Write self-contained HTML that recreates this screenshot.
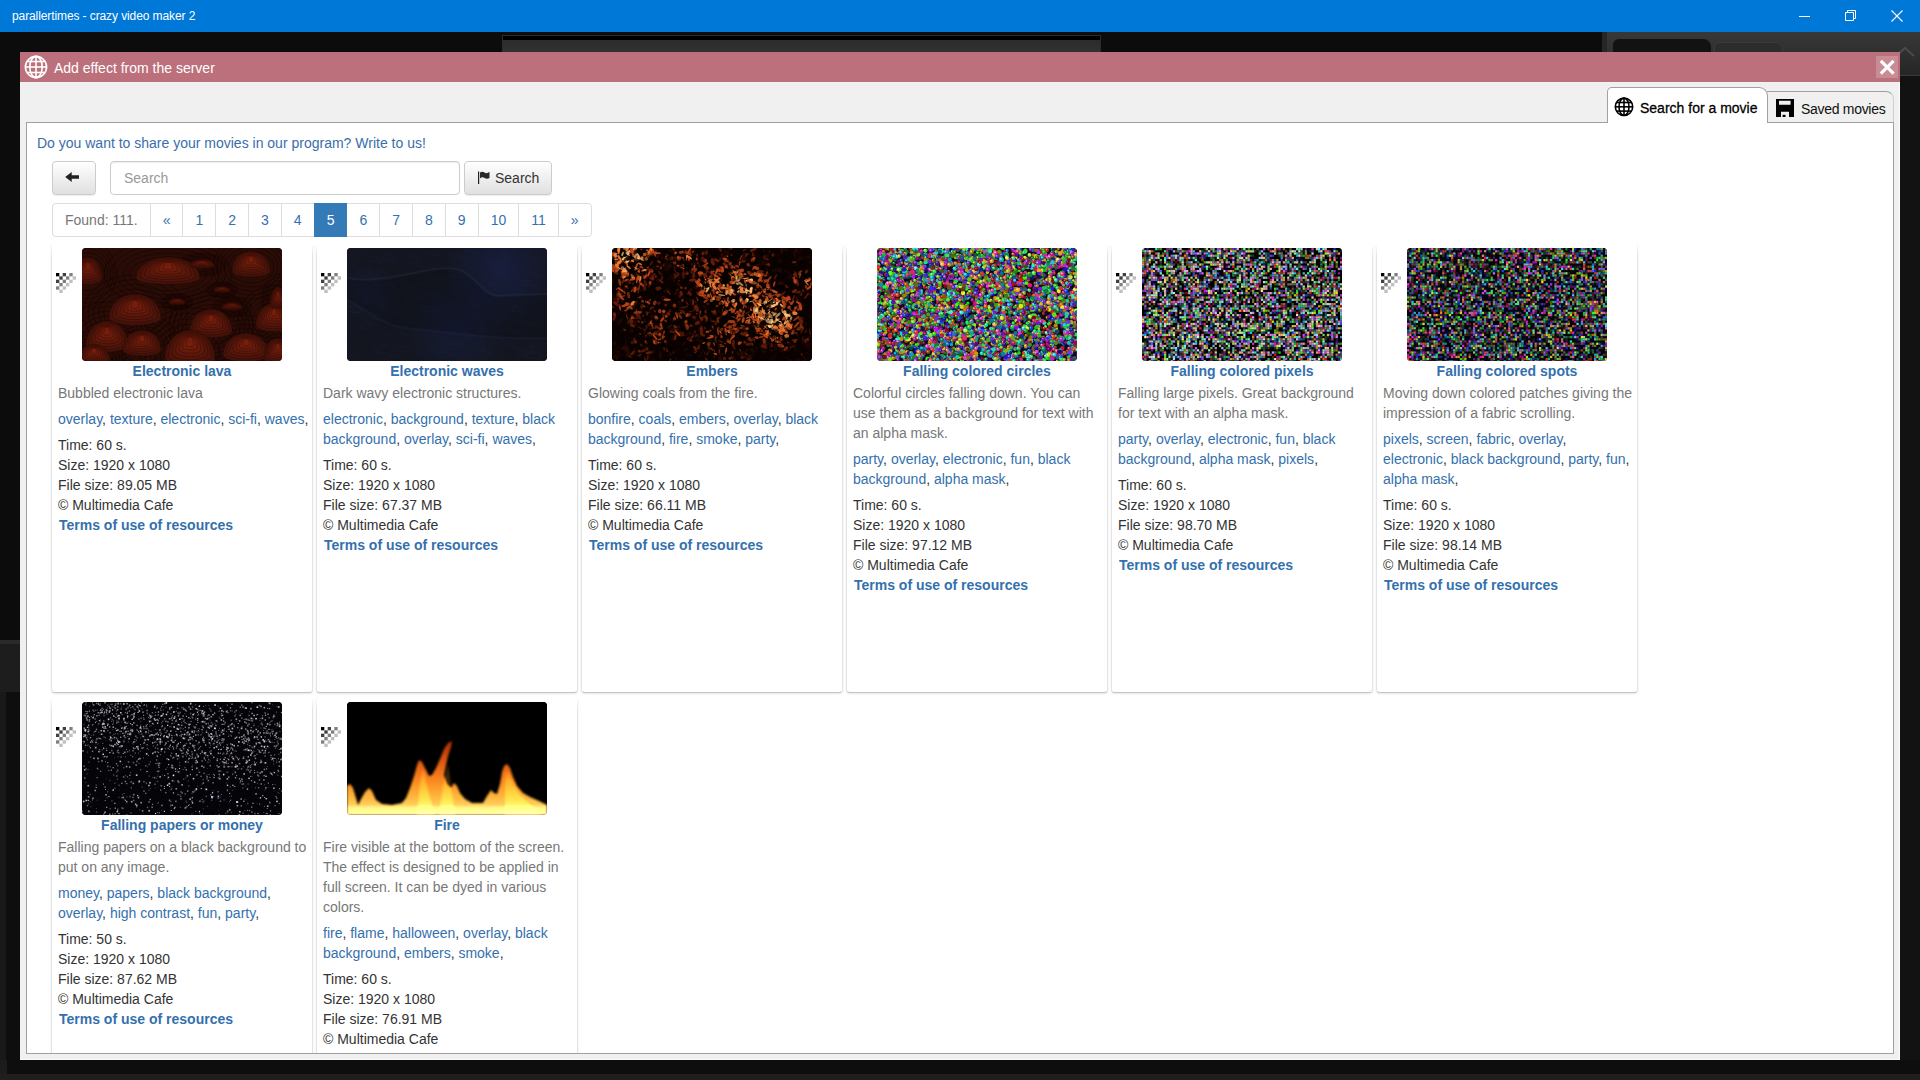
<!DOCTYPE html>
<html><head><meta charset="utf-8">
<style>
*{box-sizing:border-box}
html,body{margin:0;padding:0;width:1920px;height:1080px;overflow:hidden;background:#0c0c0c;font-family:"Liberation Sans",sans-serif}
.abs{position:absolute}
#tb{position:absolute;left:0;top:0;width:1920px;height:32px;background:#0078d7;color:#fff;font-size:12px;letter-spacing:-0.1px}
#tb .tt{position:absolute;left:12px;top:9px;line-height:14px}
#bgbar{position:absolute;left:502px;top:35px;width:599px;height:17px;background:linear-gradient(#2a2a2a,#313131);border:1px solid #2c2c2c;border-bottom:0;box-shadow:inset 0 4px 0 #000}
#bgr{position:absolute;left:1602px;top:32px;width:318px;height:44px;background:linear-gradient(#383838,#262626);border-left:5px solid #262626;border-bottom:1px solid #3a3a3a}
#bgr .t1{position:absolute;left:6px;top:7px;width:98px;height:20px;background:#121212;border-radius:6px 8px 0 0}
#bgr .t2{position:absolute;left:107px;top:10px;width:69px;height:20px;background:#2c2c2c;border-radius:6px 8px 0 0;border:1px solid #3a3a3a}
#bgl{position:absolute;left:0;top:640px;width:20px;height:52px;background:#1d1d1d;border-top:4px solid #2a2a2a}
#bgl2{position:absolute;left:0;top:692px;width:20px;height:368px;background:#0e0e0e;border-left:6px solid #191919}
#bgb{position:absolute;left:0;top:1060px;width:1920px;height:20px;background:#0e0e0e}
#bgb .b2{position:absolute;left:0;top:14px;width:1920px;height:6px;background:#1f1f1f}
#bgrr{position:absolute;left:1900px;top:76px;width:20px;height:984px;background:#121212}
#dlg{position:absolute;left:20px;top:52px;width:1880px;height:1008px;background:#f0f0f0;box-shadow:inset -1px -1px 0 #fbfbfb}
#hdr{position:absolute;left:0;top:0;width:1880px;height:30px;background:#bb707c;color:#fff;font-size:14px}
#hdr .ttl{position:absolute;left:34px;top:8px;line-height:16px}
#hdr .glb{position:absolute;left:5px;top:4px}
#hdr .cls{position:absolute;left:1856px;top:4px;width:22px;height:22px;background:#c98c95}
#panel{position:absolute;left:6px;top:70px;width:1868px;height:932px;background:#fff;border:1px solid #a0a0a0;overflow:hidden}
.tab{position:absolute;background:#f0f0f0;border:1px solid #a0a0a0;border-bottom:none;font-size:14px;color:#000}
#tab1{left:1587px;top:35px;width:161px;height:36px;background:#fff;border-radius:5px 9px 0 0;z-index:2}
#tab2{left:1747px;top:39px;width:127px;height:31px;border-radius:0 8px 0 0;border-left:none;border-right-color:#cfcfcf}
#tab1 span{position:absolute;left:32px;top:12px;font-size:14px;-webkit-text-stroke:0.28px #000;line-height:16px}
#tab2 span{position:absolute;left:34px;top:9px;letter-spacing:-0.3px;line-height:16px;color:#111}
/* page content (absolute page coords via #pg) */
#pg{position:absolute;left:0;top:0;width:1920px;height:1080px;font-size:14px;line-height:20px;color:#333;pointer-events:none}
a{color:#3470ad;text-decoration:none}
#share{position:absolute;left:37px;top:133px;color:#3a6eaa}
.btn{position:absolute;top:161px;height:34px;border:1px solid #ccc;border-radius:4px;background:linear-gradient(#fff,#e0e0e0);box-shadow:inset 0 1px 0 rgba(255,255,255,.15),0 1px 1px rgba(0,0,0,.075);color:#333}
#back{left:52px;width:44px}
#sbtn{left:464px;width:88px}
#sbtn span{position:absolute;left:30px;top:6px}
#sin{position:absolute;left:110px;top:161px;width:350px;height:34px;border:1px solid #ccc;border-radius:4px;background:#fff;box-shadow:inset 0 1px 1px rgba(0,0,0,.075)}
#sin span{position:absolute;left:13px;top:6px;color:#999}
#pag{position:absolute;left:52px;top:203px;height:34px;display:flex}
#pag div{height:34px;border:1px solid #ddd;margin-left:-1px;padding:6px 12px;color:#3571ae;background:#fff;white-space:nowrap}
#pag div:first-child{margin-left:0;color:#777;border-radius:4px 0 0 4px}
#pag div:last-child{border-radius:0 4px 4px 0}
#pag div.act{background:#337ab7;border-color:#337ab7;color:#fff;position:relative;z-index:2}
#clip{position:absolute;left:27px;top:123px;width:1866px;height:930px;overflow:hidden}
#cards{position:absolute;left:24px;top:120px;width:1600px}
.card{position:absolute;width:262px;height:450px;border:1px solid #e4e4e4;border-top-color:transparent;border-bottom-color:#c6c6c6;border-radius:4px;background:#fff;box-shadow:0 1px 2px rgba(0,0,0,.1)}
.card::before{content:"";position:absolute;left:-1px;right:-1px;top:0;height:12px;background:linear-gradient(#fff,rgba(255,255,255,0))}
.card .chk{position:absolute;left:4px;top:29px}
.card .th{position:absolute;left:30px;top:4px;width:200px;height:113px;border-radius:4px;overflow:hidden;background:#111}
.card .th canvas,.card .th svg{display:block}
.th-lava{background:#3a100a!important}.th-waves{background:#151824!important}.th-embers{background:#2a0c05!important}.th-circles{background:#5a5060!important}.th-pixels{background:#3a3440!important}.th-spots{background:#2a2632!important}.th-papers{background:#1a181e!important}.th-fire{background:linear-gradient(#000 50%,#c06018 80%,#ffd070)!important}
.card .ct{position:absolute;left:0;top:117px;width:260px;text-align:center;font-weight:bold;color:#3470ad}
.card .body{position:absolute;left:6px;top:139px;width:250.5px}
.card .cd{color:#777}
.card .tg{margin-top:6px}
.card .inf{margin-top:6px}
.card .tou{font-weight:bold;position:relative;left:1px}
.wv{width:200px;height:113px;background:radial-gradient(ellipse 60% 40% at 75% 15%,#1c2250,transparent),radial-gradient(ellipse 50% 40% at 20% 75%,#181c38,transparent),linear-gradient(170deg,#151a2c,#121624 50%,#141a30)}
.fire{width:200px;height:113px;background:#000;position:relative}
</style></head><body>
<div id="tb"><span class="tt">parallertimes - crazy video maker 2</span>
<svg class="abs" style="left:1799px;top:16px" width="12" height="2"><rect width="11" height="1" fill="#fff"/></svg>
<svg class="abs" style="left:1845px;top:10px" width="12" height="12" viewBox="0 0 12 12"><path d="M0.5 2.5h8v8h-8z M2.5 2.5v-2h8v8h-2" fill="none" stroke="#fff" stroke-width="1"/></svg>
<svg class="abs" style="left:1891px;top:10px" width="12" height="12" viewBox="0 0 12 12"><path d="M0.5 0.5L11.5 11.5M11.5 0.5L0.5 11.5" stroke="#fff" stroke-width="1.1"/></svg>
</div>
<div id="bgbar"></div>
<div id="bgr"><div class="t1"></div><div class="t2"></div></div>
<div id="bgl"></div><div id="bgl2"></div><div class="abs" style="left:795px;top:1060px;width:1px;height:14px;background:#8a1010"></div>
<div id="bgb"><div class="b2"></div><div style="position:absolute;left:0;top:0;width:7px;height:14px;background:#1c1c1c"></div></div>
<div id="bgrr"></div>
<svg class="abs" style="left:1894px;top:46px" width="22" height="12" viewBox="0 0 22 12"><path d="M2 10L11 2L20 10" fill="none" stroke="#4a4a4a" stroke-width="2.2"/></svg>
<div id="dlg">
 <div id="hdr">
  <svg class="glb" style="left:4px;top:3px" width="24" height="24" viewBox="0 0 24 24"><g fill="none" stroke="#fff" stroke-width="1.6"><circle cx="12" cy="12" r="10.6"/><ellipse cx="12" cy="12" rx="6.2" ry="10.6"/><line x1="12" y1="1.4" x2="12" y2="22.6"/><line x1="1.4" y1="12" x2="22.6" y2="12"/><line x1="2.8" y1="6.5" x2="21.2" y2="6.5"/><line x1="2.8" y1="17.5" x2="21.2" y2="17.5"/></g></svg>
  <span class="ttl">Add effect from the server</span>
  <div class="cls"><svg width="22" height="22" viewBox="0 0 22 22"><path d="M4.8 4.8L17.6 17.6M17.6 4.8L4.8 17.6" stroke="#fff" stroke-width="3.2"/></svg></div>
 </div>
 <div class="tab" id="tab1"><svg class="abs" style="left:6px;top:9px" width="20" height="20" viewBox="0 0 20 20"><g fill="none" stroke="#000" stroke-width="1.6"><circle cx="10" cy="9.8" r="8.7"/><ellipse cx="10" cy="9.8" rx="5" ry="8.7"/><line x1="10" y1="1" x2="10" y2="18.6"/><line x1="1.2" y1="9.8" x2="18.8" y2="9.8"/><line x1="2.2" y1="5.5" x2="17.8" y2="5.5"/><line x1="2.2" y1="14.1" x2="17.8" y2="14.1"/></g></svg><span>Search for a movie</span></div>
 <div class="tab" id="tab2"><svg class="abs" style="left:9px;top:7px" width="18" height="18" viewBox="0 0 18 18"><path d="M0 0H18V18H0Z M3 1.8H14.6V5.8H3Z M5 12.7H13V18H5Z" fill="#000" fill-rule="evenodd"/><rect x="6.6" y="15.8" width="2.9" height="2.2" fill="#000"/></svg><span>Saved movies</span></div>
 <div id="panel"></div>
</div>
<div id="pg">
 <div id="share">Do you want to share your movies in our program? Write to us!</div>
 <div class="btn" id="back"><svg class="abs" style="left:12px;top:10px" width="15" height="10" viewBox="0 0 15 10"><path d="M0.2 5L6.7 0V3.3H14V6.7H6.7V10Z" fill="#222"/></svg></div>
 <div id="sin"><span>Search</span></div>
 <div class="btn" id="sbtn"><svg class="abs" style="left:13px;top:9px" width="13" height="13" viewBox="0 0 13 13"><rect x="0" y="0.5" width="1.2" height="12.5" fill="#222"/><path d="M2 1.5Q4.5 0 6.5 1.5T11.5 1V7Q9 8.5 6.5 7T2 7.5Z" fill="#2a2a2a"/></svg><span>Search</span></div>
 <div id="pag"><div>Found: 111.</div><div>«</div><div>1</div><div>2</div><div>3</div><div>4</div><div class="act">5</div><div>6</div><div>7</div><div>8</div><div>9</div><div>10</div><div>11</div><div>»</div></div>
 <div id="clip"><div id="cards">
<div class="card" style="left:0px;top:0px"><svg class="chk" width="20" height="20" viewBox="0 0 20 20"><rect x="0.00" y="0.00" width="3.34" height="3.34" fill-opacity="1.00"/><rect x="6.67" y="0.00" width="3.34" height="3.34" fill-opacity="0.75"/><rect x="13.33" y="0.00" width="3.34" height="3.34" fill-opacity="0.50"/><rect x="3.33" y="3.33" width="3.34" height="3.34" fill-opacity="0.75"/><rect x="10.00" y="3.33" width="3.34" height="3.34" fill-opacity="0.50"/><rect x="16.67" y="3.33" width="3.34" height="3.34" fill-opacity="0.25"/><rect x="0.00" y="6.67" width="3.34" height="3.34" fill-opacity="0.75"/><rect x="6.67" y="6.67" width="3.34" height="3.34" fill-opacity="0.50"/><rect x="13.33" y="6.67" width="3.34" height="3.34" fill-opacity="0.25"/><rect x="3.33" y="10.00" width="3.34" height="3.34" fill-opacity="0.50"/><rect x="10.00" y="10.00" width="3.34" height="3.34" fill-opacity="0.25"/><rect x="0.00" y="13.33" width="3.34" height="3.34" fill-opacity="0.50"/><rect x="6.67" y="13.33" width="3.34" height="3.34" fill-opacity="0.25"/><rect x="3.33" y="16.67" width="3.34" height="3.34" fill-opacity="0.25"/></svg><div class="th th-lava"><canvas width="200" height="113" data-k="lava"></canvas></div>
<div class="ct">Electronic lava</div>
<div class="body"><div class="cd">Bubbled electronic lava</div>
<div class="tg"><a>overlay</a>, <a>texture</a>, <a>electronic</a>, <a>sci-fi</a>, <a>waves</a>,</div>
<div class="inf">Time: 60 s.<br>Size: 1920 x 1080<br>File size: 89.05 MB<br>© Multimedia Cafe<br><a class="tou">Terms of use of resources</a></div></div>
</div>
<div class="card" style="left:265px;top:0px"><svg class="chk" width="20" height="20" viewBox="0 0 20 20"><rect x="0.00" y="0.00" width="3.34" height="3.34" fill-opacity="1.00"/><rect x="6.67" y="0.00" width="3.34" height="3.34" fill-opacity="0.75"/><rect x="13.33" y="0.00" width="3.34" height="3.34" fill-opacity="0.50"/><rect x="3.33" y="3.33" width="3.34" height="3.34" fill-opacity="0.75"/><rect x="10.00" y="3.33" width="3.34" height="3.34" fill-opacity="0.50"/><rect x="16.67" y="3.33" width="3.34" height="3.34" fill-opacity="0.25"/><rect x="0.00" y="6.67" width="3.34" height="3.34" fill-opacity="0.75"/><rect x="6.67" y="6.67" width="3.34" height="3.34" fill-opacity="0.50"/><rect x="13.33" y="6.67" width="3.34" height="3.34" fill-opacity="0.25"/><rect x="3.33" y="10.00" width="3.34" height="3.34" fill-opacity="0.50"/><rect x="10.00" y="10.00" width="3.34" height="3.34" fill-opacity="0.25"/><rect x="0.00" y="13.33" width="3.34" height="3.34" fill-opacity="0.50"/><rect x="6.67" y="13.33" width="3.34" height="3.34" fill-opacity="0.25"/><rect x="3.33" y="16.67" width="3.34" height="3.34" fill-opacity="0.25"/></svg><div class="th th-waves"><canvas width="200" height="113" data-k="waves"></canvas></div>
<div class="ct">Electronic waves</div>
<div class="body"><div class="cd">Dark wavy electronic structures.</div>
<div class="tg"><a>electronic</a>, <a>background</a>, <a>texture</a>, <a>black background</a>, <a>overlay</a>, <a>sci-fi</a>, <a>waves</a>,</div>
<div class="inf">Time: 60 s.<br>Size: 1920 x 1080<br>File size: 67.37 MB<br>© Multimedia Cafe<br><a class="tou">Terms of use of resources</a></div></div>
</div>
<div class="card" style="left:530px;top:0px"><svg class="chk" width="20" height="20" viewBox="0 0 20 20"><rect x="0.00" y="0.00" width="3.34" height="3.34" fill-opacity="1.00"/><rect x="6.67" y="0.00" width="3.34" height="3.34" fill-opacity="0.75"/><rect x="13.33" y="0.00" width="3.34" height="3.34" fill-opacity="0.50"/><rect x="3.33" y="3.33" width="3.34" height="3.34" fill-opacity="0.75"/><rect x="10.00" y="3.33" width="3.34" height="3.34" fill-opacity="0.50"/><rect x="16.67" y="3.33" width="3.34" height="3.34" fill-opacity="0.25"/><rect x="0.00" y="6.67" width="3.34" height="3.34" fill-opacity="0.75"/><rect x="6.67" y="6.67" width="3.34" height="3.34" fill-opacity="0.50"/><rect x="13.33" y="6.67" width="3.34" height="3.34" fill-opacity="0.25"/><rect x="3.33" y="10.00" width="3.34" height="3.34" fill-opacity="0.50"/><rect x="10.00" y="10.00" width="3.34" height="3.34" fill-opacity="0.25"/><rect x="0.00" y="13.33" width="3.34" height="3.34" fill-opacity="0.50"/><rect x="6.67" y="13.33" width="3.34" height="3.34" fill-opacity="0.25"/><rect x="3.33" y="16.67" width="3.34" height="3.34" fill-opacity="0.25"/></svg><div class="th th-embers"><canvas width="200" height="113" data-k="embers"></canvas></div>
<div class="ct">Embers</div>
<div class="body"><div class="cd">Glowing coals from the fire.</div>
<div class="tg"><a>bonfire</a>, <a>coals</a>, <a>embers</a>, <a>overlay</a>, <a>black background</a>, <a>fire</a>, <a>smoke</a>, <a>party</a>,</div>
<div class="inf">Time: 60 s.<br>Size: 1920 x 1080<br>File size: 66.11 MB<br>© Multimedia Cafe<br><a class="tou">Terms of use of resources</a></div></div>
</div>
<div class="card" style="left:795px;top:0px"><div class="th th-circles"><canvas width="200" height="113" data-k="circles"></canvas></div>
<div class="ct">Falling colored circles</div>
<div class="body"><div class="cd">Colorful circles falling down. You can use them as a background for text with an alpha mask.</div>
<div class="tg"><a>party</a>, <a>overlay</a>, <a>electronic</a>, <a>fun</a>, <a>black background</a>, <a>alpha mask</a>,</div>
<div class="inf">Time: 60 s.<br>Size: 1920 x 1080<br>File size: 97.12 MB<br>© Multimedia Cafe<br><a class="tou">Terms of use of resources</a></div></div>
</div>
<div class="card" style="left:1060px;top:0px"><svg class="chk" width="20" height="20" viewBox="0 0 20 20"><rect x="0.00" y="0.00" width="3.34" height="3.34" fill-opacity="1.00"/><rect x="6.67" y="0.00" width="3.34" height="3.34" fill-opacity="0.75"/><rect x="13.33" y="0.00" width="3.34" height="3.34" fill-opacity="0.50"/><rect x="3.33" y="3.33" width="3.34" height="3.34" fill-opacity="0.75"/><rect x="10.00" y="3.33" width="3.34" height="3.34" fill-opacity="0.50"/><rect x="16.67" y="3.33" width="3.34" height="3.34" fill-opacity="0.25"/><rect x="0.00" y="6.67" width="3.34" height="3.34" fill-opacity="0.75"/><rect x="6.67" y="6.67" width="3.34" height="3.34" fill-opacity="0.50"/><rect x="13.33" y="6.67" width="3.34" height="3.34" fill-opacity="0.25"/><rect x="3.33" y="10.00" width="3.34" height="3.34" fill-opacity="0.50"/><rect x="10.00" y="10.00" width="3.34" height="3.34" fill-opacity="0.25"/><rect x="0.00" y="13.33" width="3.34" height="3.34" fill-opacity="0.50"/><rect x="6.67" y="13.33" width="3.34" height="3.34" fill-opacity="0.25"/><rect x="3.33" y="16.67" width="3.34" height="3.34" fill-opacity="0.25"/></svg><div class="th th-pixels"><canvas width="200" height="113" data-k="pixels"></canvas></div>
<div class="ct">Falling colored pixels</div>
<div class="body"><div class="cd">Falling large pixels. Great background for text with an alpha mask.</div>
<div class="tg"><a>party</a>, <a>overlay</a>, <a>electronic</a>, <a>fun</a>, <a>black background</a>, <a>alpha mask</a>, <a>pixels</a>,</div>
<div class="inf">Time: 60 s.<br>Size: 1920 x 1080<br>File size: 98.70 MB<br>© Multimedia Cafe<br><a class="tou">Terms of use of resources</a></div></div>
</div>
<div class="card" style="left:1325px;top:0px"><svg class="chk" width="20" height="20" viewBox="0 0 20 20"><rect x="0.00" y="0.00" width="3.34" height="3.34" fill-opacity="1.00"/><rect x="6.67" y="0.00" width="3.34" height="3.34" fill-opacity="0.75"/><rect x="13.33" y="0.00" width="3.34" height="3.34" fill-opacity="0.50"/><rect x="3.33" y="3.33" width="3.34" height="3.34" fill-opacity="0.75"/><rect x="10.00" y="3.33" width="3.34" height="3.34" fill-opacity="0.50"/><rect x="16.67" y="3.33" width="3.34" height="3.34" fill-opacity="0.25"/><rect x="0.00" y="6.67" width="3.34" height="3.34" fill-opacity="0.75"/><rect x="6.67" y="6.67" width="3.34" height="3.34" fill-opacity="0.50"/><rect x="13.33" y="6.67" width="3.34" height="3.34" fill-opacity="0.25"/><rect x="3.33" y="10.00" width="3.34" height="3.34" fill-opacity="0.50"/><rect x="10.00" y="10.00" width="3.34" height="3.34" fill-opacity="0.25"/><rect x="0.00" y="13.33" width="3.34" height="3.34" fill-opacity="0.50"/><rect x="6.67" y="13.33" width="3.34" height="3.34" fill-opacity="0.25"/><rect x="3.33" y="16.67" width="3.34" height="3.34" fill-opacity="0.25"/></svg><div class="th th-spots"><canvas width="200" height="113" data-k="spots"></canvas></div>
<div class="ct">Falling colored spots</div>
<div class="body"><div class="cd">Moving down colored patches giving the impression of a fabric scrolling.</div>
<div class="tg"><a>pixels</a>, <a>screen</a>, <a>fabric</a>, <a>overlay</a>, <a>electronic</a>, <a>black background</a>, <a>party</a>, <a>fun</a>, <a>alpha mask</a>,</div>
<div class="inf">Time: 60 s.<br>Size: 1920 x 1080<br>File size: 98.14 MB<br>© Multimedia Cafe<br><a class="tou">Terms of use of resources</a></div></div>
</div>
<div class="card" style="left:0px;top:454px"><svg class="chk" width="20" height="20" viewBox="0 0 20 20"><rect x="0.00" y="0.00" width="3.34" height="3.34" fill-opacity="1.00"/><rect x="6.67" y="0.00" width="3.34" height="3.34" fill-opacity="0.75"/><rect x="13.33" y="0.00" width="3.34" height="3.34" fill-opacity="0.50"/><rect x="3.33" y="3.33" width="3.34" height="3.34" fill-opacity="0.75"/><rect x="10.00" y="3.33" width="3.34" height="3.34" fill-opacity="0.50"/><rect x="16.67" y="3.33" width="3.34" height="3.34" fill-opacity="0.25"/><rect x="0.00" y="6.67" width="3.34" height="3.34" fill-opacity="0.75"/><rect x="6.67" y="6.67" width="3.34" height="3.34" fill-opacity="0.50"/><rect x="13.33" y="6.67" width="3.34" height="3.34" fill-opacity="0.25"/><rect x="3.33" y="10.00" width="3.34" height="3.34" fill-opacity="0.50"/><rect x="10.00" y="10.00" width="3.34" height="3.34" fill-opacity="0.25"/><rect x="0.00" y="13.33" width="3.34" height="3.34" fill-opacity="0.50"/><rect x="6.67" y="13.33" width="3.34" height="3.34" fill-opacity="0.25"/><rect x="3.33" y="16.67" width="3.34" height="3.34" fill-opacity="0.25"/></svg><div class="th th-papers"><canvas width="200" height="113" data-k="papers"></canvas></div>
<div class="ct">Falling papers or money</div>
<div class="body"><div class="cd">Falling papers on a black background to put on any image.</div>
<div class="tg"><a>money</a>, <a>papers</a>, <a>black background</a>, <a>overlay</a>, <a>high contrast</a>, <a>fun</a>, <a>party</a>,</div>
<div class="inf">Time: 50 s.<br>Size: 1920 x 1080<br>File size: 87.62 MB<br>© Multimedia Cafe<br><a class="tou">Terms of use of resources</a></div></div>
</div>
<div class="card" style="left:265px;top:454px"><svg class="chk" width="20" height="20" viewBox="0 0 20 20"><rect x="0.00" y="0.00" width="3.34" height="3.34" fill-opacity="1.00"/><rect x="6.67" y="0.00" width="3.34" height="3.34" fill-opacity="0.75"/><rect x="13.33" y="0.00" width="3.34" height="3.34" fill-opacity="0.50"/><rect x="3.33" y="3.33" width="3.34" height="3.34" fill-opacity="0.75"/><rect x="10.00" y="3.33" width="3.34" height="3.34" fill-opacity="0.50"/><rect x="16.67" y="3.33" width="3.34" height="3.34" fill-opacity="0.25"/><rect x="0.00" y="6.67" width="3.34" height="3.34" fill-opacity="0.75"/><rect x="6.67" y="6.67" width="3.34" height="3.34" fill-opacity="0.50"/><rect x="13.33" y="6.67" width="3.34" height="3.34" fill-opacity="0.25"/><rect x="3.33" y="10.00" width="3.34" height="3.34" fill-opacity="0.50"/><rect x="10.00" y="10.00" width="3.34" height="3.34" fill-opacity="0.25"/><rect x="0.00" y="13.33" width="3.34" height="3.34" fill-opacity="0.50"/><rect x="6.67" y="13.33" width="3.34" height="3.34" fill-opacity="0.25"/><rect x="3.33" y="16.67" width="3.34" height="3.34" fill-opacity="0.25"/></svg><div class="th th-fire"><canvas width="200" height="113" data-k="fire"></canvas></div>
<div class="ct">Fire</div>
<div class="body"><div class="cd">Fire visible at the bottom of the screen. The effect is designed to be applied in full screen. It can be dyed in various colors.</div>
<div class="tg"><a>fire</a>, <a>flame</a>, <a>halloween</a>, <a>overlay</a>, <a>black background</a>, <a>embers</a>, <a>smoke</a>,</div>
<div class="inf">Time: 60 s.<br>Size: 1920 x 1080<br>File size: 76.91 MB<br>© Multimedia Cafe<br><a class="tou">Terms of use of resources</a></div></div>
</div>
 </div></div>
</div>
<script>
(function(){
function rng(a){return function(){a|=0;a=a+0x6D2B79F5|0;var t=Math.imul(a^a>>>15,1|a);t=t+Math.imul(t^t>>>7,61|t)^t;return((t^t>>>14)>>>0)/4294967296;}}
function hsl(h,s,l){return 'hsl('+h+','+s+'%,'+l+'%)';}
function lerp(a,b,t){return Math.round(a+(b-a)*t);}
var D={
lava:function(x,R){
 x.fillStyle='#2a0c07';x.fillRect(0,0,200,113);
 var bl=[[86,30,32,21],[169,23,19,20],[6,30,14,21],[53,70,26,24],[129,83,21,22],[192,77,18,22],[196,55,8,16],[25,97,21,24],[60,102,19,20],[108,110,25,28],[164,107,23,22],[196,110,14,20],[12,112,16,16],[120,18,12,7],[140,43,8,5],[150,60,10,6],[95,55,8,5]];
 x.strokeStyle='rgba(12,3,1,0.6)';x.lineWidth=0.8;
 for(var i=0;i<bl.length;i++){var b=bl[i];for(var k=1;k<=5;k++){x.beginPath();x.ellipse(b[0],b[1]-b[3]*0.2,b[2]*(1+k*0.2),b[3]*(0.6+k*0.2),0,0,6.283);x.stroke();}}
 for(var i=0;i<bl.length;i++){var b=bl[i],n=7;
  for(var k=0;k<n;k++){var t=k/(n-1),sx=1-t*0.85,sy=1-t*0.5;
   x.fillStyle='rgb('+lerp(68,118,t)+','+lerp(18,30,t)+','+lerp(9,12,t)+')';
   var cy=b[1]-b[3]*t*0.45;
   x.beginPath();x.ellipse(b[0],cy,b[2]*sx,b[3]*sy*(1-t*0.4),0,Math.PI,2*Math.PI);x.ellipse(b[0],cy,b[2]*sx,b[3]*0.3*sx,0,0,Math.PI);x.fill();
   x.strokeStyle='rgba(28,7,3,0.55)';x.lineWidth=0.6;x.stroke();
  }
 }
},
waves:function(x,R){
 x.fillStyle='#13161f';x.fillRect(0,0,200,113);
 function glow(cx,cy,r,c){var g=x.createRadialGradient(cx,cy,2,cx,cy,r);g.addColorStop(0,c);g.addColorStop(1,'rgba(30,40,110,0)');x.fillStyle=g;x.fillRect(0,0,200,113);}
 glow(155,22,60,'rgba(35,45,125,0.3)');glow(110,82,55,'rgba(30,40,115,0.22)');glow(20,45,30,'rgba(30,40,100,0.15)');
 for(var i=0;i<600;i++){x.strokeStyle='rgba(45,55,105,'+(R()*0.22)+')';x.lineWidth=0.5;x.beginPath();var px=R()*200,py=R()*113;x.ellipse(px,py,2+R()*6,1+R()*2.5,R()*0.6,0,6.283);x.stroke();}
 x.save();x.shadowColor='rgba(120,130,160,0.35)';x.shadowBlur=4;
 x.beginPath();x.moveTo(0,30);x.bezierCurveTo(40,38,90,14,112,22);x.bezierCurveTo(130,28,135,46,150,48);x.lineTo(200,46);
 x.strokeStyle='rgba(70,78,100,0.16)';x.lineWidth=2;x.stroke();
 x.beginPath();x.moveTo(0,52);x.bezierCurveTo(20,60,35,78,60,80);x.bezierCurveTo(100,84,150,92,200,90);
 x.strokeStyle='rgba(60,68,95,0.12)';x.lineWidth=2;x.stroke();x.restore();
 x.fillStyle='rgba(0,0,0,0.12)';x.beginPath();x.moveTo(0,30);x.bezierCurveTo(40,38,90,14,112,22);x.bezierCurveTo(130,28,135,46,150,48);x.lineTo(200,46);x.lineTo(200,90);x.bezierCurveTo(150,92,100,84,60,80);x.bezierCurveTo(35,78,20,60,0,52);x.closePath();x.fill();
},
embers:function(x,R){
 x.fillStyle='#0a0201';x.fillRect(0,0,200,113);
 var hot=[[18,10,28,1.1],[75,8,18,.7],[128,38,30,1],[165,70,24,1.2],[60,68,24,.55],[18,58,16,.55],[110,92,26,.55],[192,32,9,.8],[40,95,20,.35],[95,40,14,.5]];
 function heat(px,py){var w=0.06;for(var j=0;j<hot.length;j++){var h=hot[j],d=Math.hypot(px-h[0],py-h[1]);w+=h[3]*Math.exp(-d*d/(h[2]*h[2]));}return Math.min(w,1.2);}
 for(var i=0;i<450;i++){var px=R()*200,py=R()*113;x.fillStyle='rgba(45,12,5,'+(0.25+R()*0.35)+')';x.save();x.translate(px,py);x.rotate(R()*3.14);x.beginPath();x.ellipse(0,0,1+R()*3.5,0.6+R()*1.8,0,0,6.283);x.fill();x.restore();}
 for(var i=0;i<2400;i++){
  var px=R()*200,py=R()*113,w=heat(px,py);
  if(R()>Math.pow(w,1.5)*1.25)continue;
  var b=w*(0.45+R()*0.7);
  var c=b>0.95?'rgba(255,205,130,':(b>0.7?'rgba(245,130,55,':(b>0.4?'rgba(190,70,25,':'rgba(110,32,10,'));
  x.fillStyle=c+(0.5+R()*0.5)+')';
  x.save();x.translate(px,py);x.rotate(R()*3.14);x.beginPath();x.ellipse(0,0,0.8+R()*3,0.5+R()*1.4,0,0,6.283);x.fill();x.restore();
 }
 for(var i=0;i<300;i++){x.fillStyle='rgba(6,1,0,'+(0.5+R()*0.4)+')';var px=R()*200,py=R()*113;x.save();x.translate(px,py);x.rotate(R()*3.14);x.beginPath();x.ellipse(0,0,1+R()*3,0.5+R()*1.5,0,0,6.283);x.fill();x.restore();}
},
circles:function(x,R){
 x.fillStyle='#0c0c14';x.fillRect(0,0,200,113);
 for(var i=0;i<4800;i++){
  var h=Math.floor(R()*360),l=20+R()*38,px=R()*204-2,py=R()*117-2,r=1.3+R()*1.0;
  x.fillStyle=hsl(h,60+R()*35,l);
  x.beginPath();x.arc(px,py,r,0,6.283);x.fill();
  if(R()<0.5){x.fillStyle=hsl(h,80,Math.min(90,l+30));x.beginPath();x.arc(px-0.5,py-0.5,r*0.45,0,6.283);x.fill();}
 }
},
pixels:function(x,R){
 x.fillStyle='#000';x.fillRect(0,0,200,113);
 for(var yy=0;yy<113;yy+=2.2){for(var xx=0;xx<200;xx+=2.2){
  var r=R(); if(r<0.3)continue;
  x.fillStyle=hsl(Math.floor(R()*360),35+R()*55,12+R()*70);
  x.fillRect(xx,yy,2.3,2.3);
 }}
},
spots:function(x,R){
 x.fillStyle='#040410';x.fillRect(0,0,200,113);
 for(var yy=0;yy<113;yy+=2.2){for(var xx=0;xx<200;xx+=2.2){
  var r=R(); if(r<0.35)continue;
  x.fillStyle=hsl(Math.floor(R()*360),40+R()*50,8+R()*55);
  x.fillRect(xx,yy,2.3,2.3);
 }}
},
papers:function(x,R){
 x.fillStyle='#050408';x.fillRect(0,0,200,113);
 for(var i=0;i<3200;i++){
  var px=R()*200,py=R()*113;
  var dens=0.3+0.7*Math.exp(-Math.pow((py-30-(px-100)*0.15)/32,2));
  if(R()>dens)continue;
  var l=R();
  x.fillStyle='rgba('+(150+l*105|0)+','+(145+l*100|0)+','+(165+l*90|0)+','+(0.35+R()*0.6)+')';
  var s=0.7+R()*1.0;x.fillRect(px,py,s,s);
 }
 x.fillStyle='#d8a0e8';x.fillRect(129,94,2,2);x.fillRect(154,99,2,2);
},
fire:function(x,R){
 x.fillStyle='#000';x.fillRect(0,0,200,113);
 var P=[[0,113],[0,84],[3,82],[6,86],[9,96],[11,103],[14,97],[18,90],[22,86],[25,89],[29,98],[35,102],[45,103],[55,101],[59,96],[63,86],[67,74],[70,63],[72,58],[75,60],[79,68],[82,74],[85,73],[89,66],[93,57],[97,47],[101,41],[105,39],[104,45],[101,54],[99,63],[97,73],[100,82],[104,86],[107,81],[110,84],[113,91],[118,97],[125,101],[136,101],[140,94],[144,88],[147,91],[150,92],[153,82],[155,70],[157,64],[160,62],[163,66],[166,75],[170,84],[176,91],[183,95],[192,99],[200,103],[200,113]];
 function path(){x.beginPath();x.moveTo(P[0][0],P[0][1]);for(var i=1;i<P.length;i++){x.lineTo(P[i][0],P[i][1]);}x.closePath();}
 var g=x.createLinearGradient(0,38,0,113);
 g.addColorStop(0,'#a82806');g.addColorStop(0.3,'#e05a10');g.addColorStop(0.55,'#fb8a20');g.addColorStop(0.8,'#ffbf45');g.addColorStop(1,'#ffeaa0');
 try{x.filter='blur(0.8px)';}catch(e){}
 x.fillStyle=g;path();x.fill();
 x.globalCompositeOperation='lighter';
 x.fillStyle='rgba(120,80,20,0.5)';
 x.beginPath();x.moveTo(92,113);x.lineTo(96,85);x.lineTo(101,62);x.lineTo(103,75);x.lineTo(108,113);x.fill();
 x.beginPath();x.moveTo(158,113);x.lineTo(158,82);x.lineTo(160,70);x.lineTo(172,92);x.lineTo(195,113);x.fill();
 x.beginPath();x.moveTo(70,113);x.lineTo(73,82);x.lineTo(76,68);x.lineTo(82,92);x.lineTo(88,113);x.fill();
 x.fillStyle='rgba(100,70,30,0.5)';x.fillRect(0,104,200,9);
 x.globalCompositeOperation='source-over';
 x.filter='none';
}
};
var cs=document.querySelectorAll('canvas[data-k]');
for(var i=0;i<cs.length;i++){var k=cs[i].getAttribute('data-k');if(D[k])D[k](cs[i].getContext('2d'),rng(1234+i*77));}
})();

</script>
</body></html>
